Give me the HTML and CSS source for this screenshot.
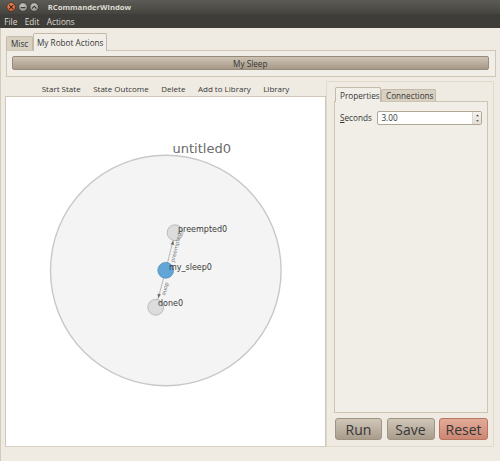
FILE: index.html
```html
<!DOCTYPE html>
<html>
<head>
<meta charset="utf-8">
<link rel="stylesheet" href="styles.css">
</head>
<body>
<div class="window">
  <div class="titlebar">
    <svg class="wbtns" width="44" height="14" viewBox="0 0 44 14">
      <defs>
        <radialGradient id="gc" cx="0.45" cy="0.35" r="0.7">
          <stop offset="0" stop-color="#f79a6a"/>
          <stop offset="1" stop-color="#d8501c"/>
        </radialGradient>
        <radialGradient id="gg" cx="0.45" cy="0.35" r="0.7">
          <stop offset="0" stop-color="#c9c6bf"/>
          <stop offset="1" stop-color="#8f8c85"/>
        </radialGradient>
      </defs>
      <circle cx="11.2" cy="7" r="4.3" fill="url(#gc)" stroke="#2f2e2a" stroke-width="0.6"/>
      <path d="M9.4 5.2 L13 8.8 M13 5.2 L9.4 8.8" stroke="#3a2a22" stroke-width="1.2" stroke-linecap="round"/>
      <circle cx="23" cy="7" r="4.3" fill="url(#gg)" stroke="#2f2e2a" stroke-width="0.6"/>
      <path d="M21.2 7.6 L24.8 7.6" stroke="#3c3b37" stroke-width="1.2" stroke-linecap="round"/>
      <circle cx="34.2" cy="7" r="4.3" fill="url(#gg)" stroke="#2f2e2a" stroke-width="0.6"/>
      <path d="M32.4 8.2 L34.2 6.2 L36 8.2" fill="none" stroke="#3c3b37" stroke-width="1.2" stroke-linecap="round" stroke-linejoin="round"/>
    </svg>
    <span class="title">RCommanderWindow</span>
  </div>
  <div class="menubar"><span>File</span><span>Edit</span><span>Actions</span></div>
  <div class="main">
    <div class="tabs toptabs">
      <div class="tab inactive misc">Misc</div>
      <div class="tab active robot">My Robot Actions</div>
    </div>
    <div class="frame">
      <div class="widebtn">My Sleep</div>
    </div>
    <div class="panes">
      <div class="left">
        <div class="toolbar">
          <span>Start State</span><span>State Outcome</span><span>Delete</span><span>Add to Library</span><span>Library</span>
        </div>
        <div class="canvas">
          <svg class="graph" width="319" height="349" viewBox="6 97 319 349">
            <text x="201.7" y="152.7" text-anchor="middle" class="gtitle">untitled0</text>
            <circle cx="165.8" cy="270.5" r="115.3" fill="#f4f4f4" stroke="#c8c8c8" stroke-width="1.4"/>
            <line x1="165.7" y1="270.3" x2="175" y2="232.7" stroke="#8c8c8c" stroke-width="0.6"/>
            <line x1="165.7" y1="270.3" x2="155.7" y2="307.3" stroke="#8c8c8c" stroke-width="0.6"/>
            <circle cx="175" cy="232.7" r="7.9" fill="#dcdcdc" stroke="#a9a9a9" stroke-width="0.7"/>
            <circle cx="155.7" cy="307.3" r="7.9" fill="#dcdcdc" stroke="#a9a9a9" stroke-width="0.7"/>
            <polygon points="173.3,240.8 174.09,245.11 170.59,244.25" fill="#6a6a6a"/>
            <polygon points="158.2,298 160.98,294.61 157.5,293.67" fill="#6a6a6a"/>
            <circle cx="165.7" cy="270.3" r="7.9" fill="#62a6d8" stroke="#4a86b2" stroke-width="0.7"/>
            <text x="178" y="232" class="nlabel">preempted0</text>
            <text x="169" y="269.5" class="nlabel">my_sleep0</text>
            <text x="158" y="306" class="nlabel">done0</text>
            <text transform="translate(176,247.5) rotate(-76)" text-anchor="middle" dy="1.9" class="elabel">preempted</text>
            <text transform="translate(165.8,289) rotate(105)" text-anchor="middle" dy="1.9" class="elabel">done</text>
          </svg>
        </div>
      </div>
      <div class="right">
        <div class="tabs subtabs">
          <div class="tab active props">Properties</div>
          <div class="tab inactive conns">Connections</div>
        </div>
        <div class="panel">
          <div class="row">
            <span class="lbl"><u>S</u>econds</span>
            <div class="entry">
              <span class="val">3.00</span>
              <div class="spin">
                <svg width="9" height="12" viewBox="0 0 9 12">
                  <path d="M3 4.2 L4.5 2.6 L6 4.2 Z" fill="#4a4a4a"/>
                  <path d="M3 8.2 L4.5 9.8 L6 8.2 Z" fill="#4a4a4a"/>
                </svg>
              </div>
            </div>
          </div>
        </div>
        <div class="buttons">
          <div class="btn run">Run</div>
          <div class="btn save">Save</div>
          <div class="btn reset">Reset</div>
        </div>
      </div>
    </div>
  </div>
</div>
</body>
</html>
```
FILE: styles.css
```css
* { box-sizing: border-box; margin: 0; padding: 0; }
html, body { width: 500px; height: 461px; overflow: hidden; }
body {
  font-family: "Open Sans", "DejaVu Sans", sans-serif;
  font-size: 8.2px;
  color: #363636;
  background: #efebe3;
}
.window { width: 500px; height: 461px; display: flex; flex-direction: column; }

.titlebar {
  height: 14px;
  background: linear-gradient(#5c5b56, #45443f);
  display: flex;
  align-items: center;
}
.wbtns { display: block; flex: none; }
.title { margin-left: 3.7px; font-weight: 700; font-size: 7.7px; color: #dfdbd2; line-height: 14px; }

.menubar {
  height: 14px;
  background: #3e3d39;
  display: flex;
  align-items: center;
  padding-left: 4.3px;
  gap: 7.5px;
  color: #dfdbd2;
}

.main {
  flex: 1;
  display: flex;
  flex-direction: column;
  padding: 5px 4.5px 14px 4px;
  border-left: 1px solid #d3cabb;
}

.tabs { display: flex; align-items: flex-end; margin-left: 1px; position: relative; z-index: 1; }
.toptabs { height: 17px; }
.tab {
  border: 1px solid #c4baa9;
  border-bottom: none;
  border-radius: 2px 2px 0 0;
  display: flex;
  align-items: center;
  white-space: nowrap;
}
.tab.inactive { background: #d8d0c1; }
.tab.active { background: #f1eee8; margin-bottom: -1px; }
.misc { width: 27px; height: 14px; padding-left: 4px; }
.robot { width: 74px; height: 18px; padding-left: 3px; padding-bottom: 1px; }

.frame {
  margin-left: 1px;
  height: 27px;
  border: 1px solid #cfc6b5;
  background: #f1eee8;
  padding: 5px 6px 5px 5px;
}
.widebtn {
  height: 14px;
  border: 1px solid #978b7b;
  border-radius: 2px;
  background: linear-gradient(#cdc3b4, #a69988);
  display: flex;
  align-items: center;
  justify-content: center;
  color: #363636;
}

.panes { margin-top: 4px; height: 366px; display: flex; }
.left { width: 321px; display: flex; flex-direction: column; }
.toolbar {
  height: 15px;
  display: flex;
  align-items: center;
  justify-content: center;
  gap: 12.5px;
  font-size: 8px;
  white-space: nowrap;
}
.canvas {
  flex: 1;
  border: 1px solid #cec6b6;
  border-bottom-color: #d6cfc1;
  background: #ffffff;
  overflow: hidden;
}
.graph { display: block; }
.gtitle { font-family: "DejaVu Sans", sans-serif; font-size: 13px; fill: #6a6a6a; }
.nlabel { font-family: "DejaVu Sans", sans-serif; font-size: 8px; fill: #3a3a3a; }
.elabel { font-family: "DejaVu Sans", sans-serif; font-size: 5.5px; fill: #808080; }

.right {
  flex: 1;
  margin-right: 2px;
  border: 1px solid #e0d9cc;
  padding: 5px 5px 6px 7px;
  display: flex;
  flex-direction: column;
}
.subtabs { height: 14px; }
.props { width: 46px; height: 15px; padding-left: 4px; }
.conns { width: 55px; height: 12px; padding-left: 4px; }

.panel {
  flex: 1;
  border: 1px solid #cdc4b3;
  background: #f1eee8;
  padding: 8.7px 5.5px 0 5px;
}
.row { display: flex; align-items: center; height: 14px; }
.lbl { margin-right: 5px; white-space: nowrap; }
.lbl u { text-decoration: underline; text-underline-offset: 1px; }
.entry {
  flex: 1;
  height: 14px;
  border: 1px solid #b1a796;
  border-radius: 2px;
  background: #ffffff;
  display: flex;
  align-items: center;
}
.val { flex: 1; padding-left: 3.5px; color: #333; }
.spin {
  width: 9px;
  height: 12px;
  border-left: 1px solid #ddd6ca;
  background: linear-gradient(#f6f4f0, #e3ddd3);
}
.spin svg { display: block; }

.buttons { margin-top: 5px; margin-left: 1px; height: 22px; display: flex; gap: 4.5px; }
.btn {
  height: 22px;
  border: 1px solid #9f9382;
  border-radius: 3px;
  background: linear-gradient(#d0c7b9, #a99c8b);
  display: flex;
  align-items: center;
  justify-content: center;
  font-size: 14px;
  color: #363636;
}
.run { width: 47px; }
.save { width: 48px; }
.reset {
  width: 49px;
  border-color: #b97562;
  background: linear-gradient(#e2aa98, #cc8773);
}
```
